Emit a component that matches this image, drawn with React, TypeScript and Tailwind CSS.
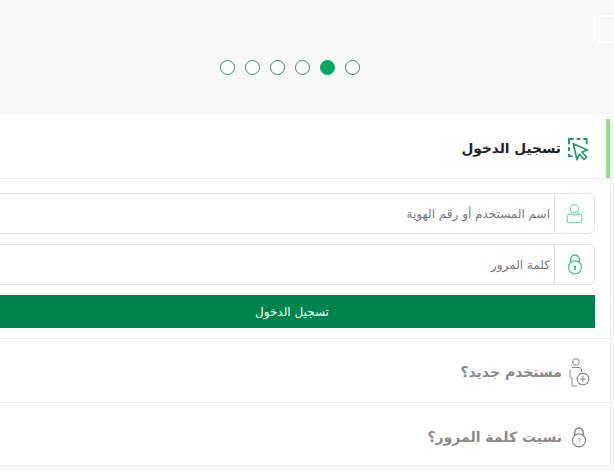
const font = { fontFamily: '"DejaVu Sans", sans-serif' };

function UserIcon() {
  return (
    <svg width="17" height="21" viewBox="0 0 18 22" fill="none" stroke="#7fd6ab" strokeWidth="1.3">
      <circle cx="9" cy="6" r="4.3" />
      <path d="M5.5 11.5C2.5 11.5 1.2 13 1.2 15v3c0 1.6 1 2.6 2.6 2.6h10.400c1.600 0 2.600-1 2.600-2.600v-3c0-2-1.300-3.500-4.300-3.500-1 .8-2.200 1.200-3.500 1.200s-2.500-.4-3.500-1.200z" />
    </svg>
  );
}

function LockIcon({ color, mark }: { color: string; mark: "key" | "q" }) {
  return (
    <svg width="16" height="21" viewBox="0 0 16 22" fill="none" stroke={color} strokeWidth="1.3">
      <path d="M3.500 9V5.500a4.500 4.500 0 0 1 9 0V9" strokeWidth="1.600" />
      <circle cx="8" cy="14" r="6.800" />
      {mark === "key" ? (
        <path d="M6.800 12.500h2.400l-.5 2v2.200h-1.400v-2.200z" fill="#00a862" stroke="none" />
      ) : (
        <path d="M6.500 12.600c.3-1 2.800-1 3 .3.100 1-1.500 1.200-1.500 2.200M8 16.300v.8" strokeWidth="1" />
      )}
    </svg>
  );
}

function CursorIcon() {
  return (
    <svg width="21" height="24" viewBox="0 0 22 24" fill="none">
      <path d="M1 7V1.500h5M9 1.500h4M16 1.500h3.500V7M1 10v4M1 17v2.500h4" stroke="#1f9d66" strokeWidth="2" />
      <path d="M5.500 6.500L20.500 13l-6 2.200 5 5.200-2.600 2.400-5-5.300-2.400 5.800z" fill="#fff" stroke="#1f9d66" strokeWidth="1.800" strokeLinejoin="round" />
    </svg>
  );
}

function NewUserIcon() {
  return (
    <svg width="21" height="29" viewBox="0 0 21 29" fill="none" stroke="#8c8c8c" strokeWidth="1">
      <circle cx="7" cy="4" r="3.300" />
      <path d="M3 9.500h7c1.500 0 2.500 1 2.500 2.500v2M1 11.500v8M1.500 20h1.500v8M8 28h-5M10 27.500v-1" />
      <circle cx="14" cy="21" r="5.800" strokeWidth="1.200" />
      <path d="M14 18v6M11 21h6" />
    </svg>
  );
}

function InputRow({ label, icon }: { label: string; icon: React.ReactNode }) {
  return (
    <div className="flex h-[41px] rounded-md border border-[#e3e3e3] bg-white">
      <div className="flex w-10 shrink-0 items-center justify-center border-l border-[#e3e3e3]">{icon}</div>
      <div className="flex items-center pr-[4px] text-[12px] text-[#777]">{label}</div>
    </div>
  );
}

function LinkRow({ label, icon, className }: { label: string; icon: React.ReactNode; className: string }) {
  return (
    <div className={`flex items-center gap-[6px] border-b border-[#eeeeee] pr-[20px] ${className}`}>
      <div className="flex w-[22px] justify-center">{icon}</div>
      <span className="text-[14px] font-bold text-[#8a8a8a]">{label}</span>
    </div>
  );
}

export default function App() {
  return (
    <div dir="rtl" style={font} className="h-[471px] w-[614px] overflow-hidden bg-[#f8f8f8]">
      <div className="w-[649px]">
        <div className="relative flex h-[115px] items-start justify-center bg-[#f8f8f8] pt-[60px]">
          <div className="absolute top-[15px] right-[-14px] h-[28px] w-[30px] border-2 border-white" />
          <div dir="ltr" className="flex gap-[10px]">
            {[0, 1, 2, 3, 4, 5].map((i) => (
              <span
                key={i}
                className={`h-[15px] w-[15px] rounded-full border-[1.3px] ${i === 4 ? "border-[#00a862] bg-[#00a862]" : "border-[#2f8f6c] bg-white"}`}
              />
            ))}
          </div>
        </div>

        <div className="mr-[3px] h-[351px] border-r border-b border-[#eeeeee] bg-white">
          <div className="relative flex h-[64px] items-center gap-[7px] border-b border-[#eeeeee] pt-[4px] pr-[21px]">
            <div className="absolute top-[4px] right-0 h-[59px] w-[4px] bg-[#8fe37f]" />
            <CursorIcon />
            <h2 className="text-[13.7px] font-bold text-[#222]">تسجيل الدخول</h2>
          </div>
          <div className="flex flex-col gap-[10px] border-b border-[#eeeeee] pt-[14px] pr-[15px] pb-[10px] pl-[24px]">
            <InputRow label="اسم المستخدم أو رقم الهوية" icon={<UserIcon />} />
            <InputRow label="كلمة المرور" icon={<LockIcon color="#4cc48c" mark="key" />} />
            <button className="h-[33px] w-full bg-[#00844d] text-[12px] text-white">تسجيل الدخول</button>
          </div>
          <LinkRow label="مستخدم جديد؟" icon={<NewUserIcon />} className="h-[64px] pt-[3px]" />
          <LinkRow label="نسيت كلمة المرور؟" icon={<LockIcon color="#8c8c8c" mark="q" />} className="h-[63px] pt-[6px]" />
        </div>
      </div>
    </div>
  );
}
